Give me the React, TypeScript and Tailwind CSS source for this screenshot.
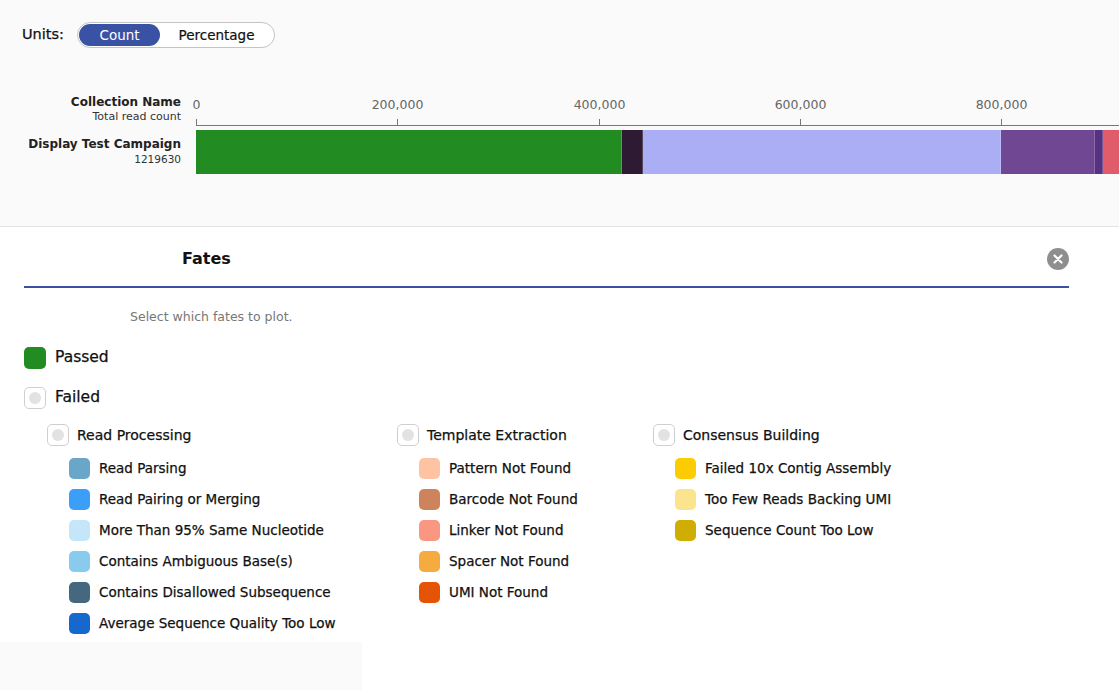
import React from 'react';

type Fate = { label: string; color: string };

const readProcessing: Fate[] = [
  { label: 'Read Parsing', color: '#6aa6c8' },
  { label: 'Read Pairing or Merging', color: '#3d9ef7' },
  { label: 'More Than 95% Same Nucleotide', color: '#c5e6f8' },
  { label: 'Contains Ambiguous Base(s)', color: '#88cbef' },
  { label: 'Contains Disallowed Subsequence', color: '#44697e' },
  { label: 'Average Sequence Quality Too Low', color: '#1667d0' },
];

const templateExtraction: Fate[] = [
  { label: 'Pattern Not Found', color: '#fdc3a2' },
  { label: 'Barcode Not Found', color: '#cd845d' },
  { label: 'Linker Not Found', color: '#f99780' },
  { label: 'Spacer Not Found', color: '#f5ab3f' },
  { label: 'UMI Not Found', color: '#e55304' },
];

const consensusBuilding: Fate[] = [
  { label: 'Failed 10x Contig Assembly', color: '#fdcb01' },
  { label: 'Too Few Reads Backing UMI', color: '#fbe48d' },
  { label: 'Sequence Count Too Low', color: '#d0ad03' },
];

const segments = [
  { count: 423350, color: '#228b22' },
  { count: 20870, color: '#2e1a33' },
  { count: 355780, color: '#acaef5' },
  { count: 93420, color: '#6f4793' },
  { count: 7950, color: '#583282' },
  { count: 318260, color: '#e05c6a' },
];

const PX_PER_READ = 201.25 / 200000;
const ticks = [0, 200000, 400000, 600000, 800000];

const EmptyBox = () => (
  <div className="w-[22px] h-[22px] rounded-[5px] border border-[#cfcfcf] bg-white flex items-center justify-center shrink-0">
    <div className="w-[12px] h-[12px] rounded-full bg-[#e2e2e2]" />
  </div>
);

const Swatch = ({ color }: { color: string }) => (
  <div className="w-[21px] h-[21px] rounded-[5px] shrink-0" style={{ backgroundColor: color }} />
);

const FateGroup = ({ title, items, width }: { title: string; items: Fate[]; width: string }) => (
  <div className={width}>
    <div className="flex items-center h-[22px]">
      <EmptyBox />
      <span className="ml-[8px] text-[14px] text-[#111] [-webkit-text-stroke:0.25px_#111]">{title}</span>
    </div>
    <div className="mt-[12px] flex flex-col gap-[10px] pl-[22px]">
      {items.map((f) => (
        <div key={f.label} className="flex items-center h-[21px]">
          <Swatch color={f.color} />
          <span className="ml-[9px] text-[13.5px] text-[#111] [-webkit-text-stroke:0.25px_#111]">{f.label}</span>
        </div>
      ))}
    </div>
  </div>
);

export default function App() {
  return (
    <div className="w-[1119px] h-[690px] overflow-hidden bg-white font-['DejaVu_Sans',sans-serif] text-[#111]">
      <div className="h-[227px] bg-[#fafafa] border-b border-[#e4e4e4]">
        <div className="flex items-center pl-[22px] pt-[22px]">
          <span className="w-[55px] text-[14.5px] [-webkit-text-stroke:0.25px_#111]">Units:</span>
          <div className="flex items-center h-[26px] w-[198px] rounded-full border border-[#c4c4c4] bg-white p-px">
            <div className="h-full w-[81px] rounded-full bg-[#3a52a3] text-white text-[13.5px] flex items-center justify-center">
              Count
            </div>
            <div className="flex-1 text-[13.5px] flex items-center justify-center [-webkit-text-stroke:0.2px_#111]">Percentage</div>
          </div>
        </div>

        <div className="mt-[45px] flex">
          <div className="w-[181px] shrink-0 flex flex-col items-end">
            <div className="h-[36px] flex flex-col items-end justify-start pt-px">
              <span className="text-[12px] font-bold leading-[16px] text-[#222]">Collection Name</span>
              <span className="text-[11px] leading-[13px] text-[#333]">Total read count</span>
            </div>
            <div className="h-[44px] flex flex-col items-end justify-center">
              <span className="text-[12px] font-bold leading-[16px] text-[#222]">Display Test Campaign</span>
              <span className="text-[10.5px] leading-[14px] text-[#333]">1219630</span>
            </div>
          </div>
          <div className="ml-[15px] flex-1">
            <svg width="923" height="36" className="block overflow-visible">
              <line x1="0" y1="32.5" x2="923" y2="32.5" stroke="#777" strokeWidth="1" />
              {ticks.map((t) => {
                const x = Math.round(t * PX_PER_READ) + 0.5;
                return (
                  <g key={t}>
                    <line x1={x} y1="26" x2={x} y2="32" stroke="#777" strokeWidth="1" />
                    <text x={x} y="16" textAnchor="middle" fontSize="12.5" fill="#666" fontFamily="DejaVu Sans, sans-serif">
                      {t.toLocaleString('en-US')}
                    </text>
                  </g>
                );
              })}
            </svg>
            <div className="mt-px flex h-[44px] w-[1300px]">
              {segments.map((s, i) => (
                <div
                  key={i}
                  className="h-full border-r border-white/20 shrink-0"
                  style={{ width: Math.round(s.count * PX_PER_READ), backgroundColor: s.color }}
                />
              ))}
            </div>
          </div>
        </div>
      </div>

      <div className="w-[1045px] ml-[24px]">
        <div className="h-[61px] pt-[5px] flex items-center justify-between border-b-2 border-[#3a52a3]">
          <span className="ml-[158px] text-[16px] font-bold">Fates</span>
          <button className="w-[22px] h-[22px] rounded-full bg-[#8e8e8e] flex items-center justify-center">
            <svg width="10" height="10" viewBox="0 0 10 10">
              <path d="M1.5 1.5 L8.5 8.5 M8.5 1.5 L1.5 8.5" stroke="white" strokeWidth="2.2" strokeLinecap="round" />
            </svg>
          </button>
        </div>
        <div className="h-[59px] flex items-center pl-[106px] text-[12.5px] text-[#777]">
          Select which fates to plot.
        </div>
        <div className="flex items-center h-[22px]">
          <div className="w-[22px] h-[22px] rounded-[5px] bg-[#228b22]" />
          <span className="ml-[9px] text-[15.5px] [-webkit-text-stroke:0.25px_#111]">Passed</span>
        </div>
        <div className="flex items-center h-[22px] mt-[18px]">
          <EmptyBox />
          <span className="ml-[9px] text-[15.5px] [-webkit-text-stroke:0.25px_#111]">Failed</span>
        </div>
        <div className="flex mt-[15px] pl-[23px]">
          <FateGroup title="Read Processing" items={readProcessing} width="w-[350px]" />
          <FateGroup title="Template Extraction" items={templateExtraction} width="w-[256px]" />
          <FateGroup title="Consensus Building" items={consensusBuilding} width="w-[300px]" />
        </div>
      </div>
      <div className="mt-[8px] w-[362px] h-[60px] bg-[#fafafa]" />
    </div>
  );
}
